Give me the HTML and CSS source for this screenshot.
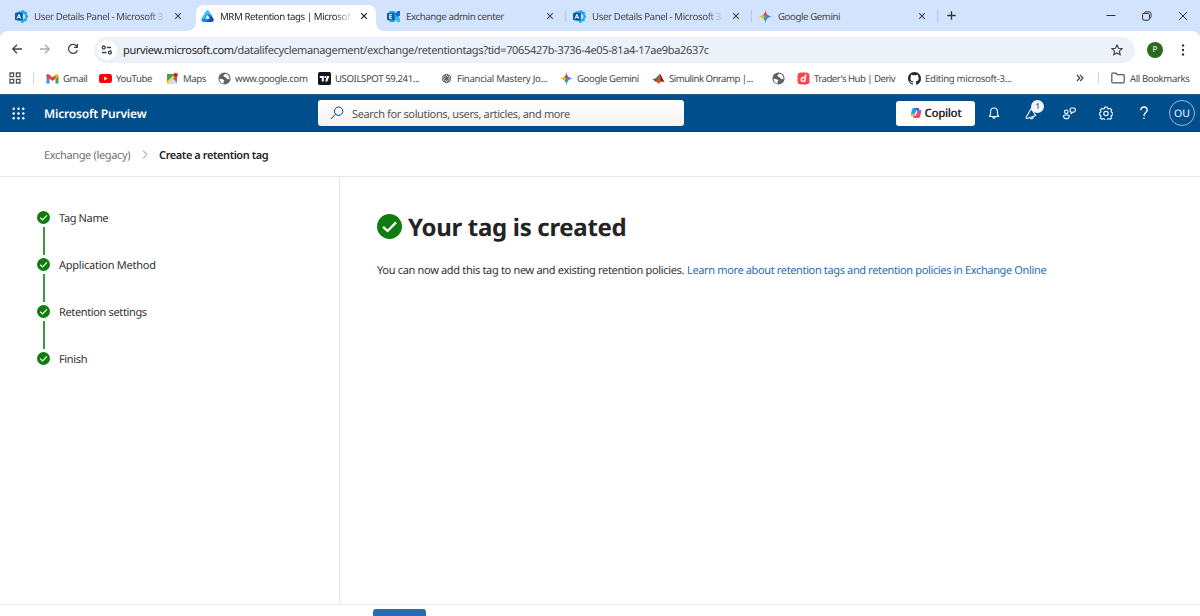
FILE: index.html
```html
<!DOCTYPE html>
<html lang="en">
<head>
    <meta charset="UTF-8" />
    <meta name="viewport" content="width=device-width, initial-scale=1" />
    <title>MRM Retention tags | Microsoft Purview</title>
    <link rel="stylesheet" href="styles.css">
</head>
<body>
    <!-- shared icons -->
    <svg class="sprite" width="0" height="0">
        <symbol id="admin" viewBox="0 0 13 13">
            <path d="M4 1l2 .6L7 .3h2l.5 1.500 1.700-.3 1 1.700-.8 1.400 1.600 1v2l-1.600.9.6 1.600-1.300 1.500-1.700-.4L8.500 12.700H6.300L5.500 11H3L1 9V3z" fill="#1fa9ea"/>
            <path d="M7.500 3.500Q10.300 4 10.300 6.500T7.500 9.500z" fill="#b9eafd"/>
            <rect y="2.700" width="7.800" height="7.600" rx="1" fill="#0c59a4"/>
            <path d="M2 8.600 3.900 4.400 5.800 8.600M2.700 7.300h2.400" fill="none" stroke="#fff" stroke-width="1"/>
        </symbol>
        <symbol id="gemini" viewBox="0 0 12 12">
            <path d="M6 0C6.400 3.700 8.300 5.600 12 6 8.300 6.400 6.400 8.300 6 12 5.600 8.300 3.700 6.400 0 6 3.700 5.600 5.600 3.700 6 0z" fill="#4285f4"/>
            <path d="M6 0C6.400 3.700 7 4.600 8 5.200L4 6 3.800 4.900C5.200 4 5.700 2.700 6 0z" fill="#ea4335"/>
            <path d="M0 6c2-.2 3.300-.8 4.200-1.700L5.500 6 4.200 7.700C3.300 6.800 2 6.200 0 6z" fill="#fbbc04"/>
            <path d="M4.200 7.700 6 6.300 7.200 8.500C6.500 9.400 6.200 10.400 6 12 5.800 10.200 5.200 8.700 4.200 7.700z" fill="#34a853"/>
        </symbol>
        <symbol id="globe" viewBox="0 0 12 12">
            <circle cx="6" cy="6" r="5.600" fill="#5f6368"/>
            <path d="M1.400 6.200 4.500 6.700 6 8l-1 .8.300 1.900C3 10.500 1.300 8.600 1.400 6.200zM6.600 1.500 5 3l.6 1.400L7.500 5l.7 1.500 2.300.2C11 4 9.200 1.700 6.600 1.500z" fill="#fff"/>
        </symbol>
        <symbol id="close" viewBox="0 0 8 8">
            <path d="M1.200 1.200l5.600 5.600M6.800 1.200 1.200 6.800" fill="none" stroke="currentColor" stroke-width="1.200"/>
        </symbol>
        <symbol id="check" viewBox="0 0 24 24">
            <circle cx="12" cy="12" r="12" fill="#107c10"/>
            <path d="M5.800 12.300 10.200 16.300 18.300 8" fill="none" stroke="#fff" stroke-width="2.200"/>
        </symbol>
    </svg>

    <div class="tab-strip">
        <div class="tab">
            <svg class="tab-icon"><use href="#admin"/></svg>
            <span class="tab-title fade t1">User Details Panel - Microsoft 3</span>
            <svg class="close"><use href="#close"/></svg>
        </div>
        <div class="tab active">
            <svg class="tab-icon" viewBox="0 0 13 13">
                <path d="M5 1.500Q6.500-.5 8 1.500L12.500 9Q13 11.500 10.500 12h-8Q0 11.500.5 9z" fill="#1688e8"/>
                <path d="M5 1.500Q6.500-.5 8 1.500L9.500 4H6L2.800 9 .5 9z" fill="#35c9f0"/>
                <path d="M10 5l2.500 4q.5 2.500-2 3H5L8 9z" fill="#164fc4"/>
                <path d="M6.500 4.800 8.700 8.800H4.300z" fill="#fff"/>
            </svg>
            <span class="tab-title fade t2">MRM Retention tags | Microsof</span>
            <svg class="close"><use href="#close"/></svg>
        </div>
        <div class="tab">
            <svg class="tab-icon" viewBox="0 0 13 13">
                <path d="M2.500 1h5l4.500 5.500-4.500 5.500h-5z" fill="#2aa8e8"/>
                <path d="M8 4.500 10.500 1H13v4.500L11 7z" fill="#0a70c8"/>
                <path d="M8 8.500 10.500 6 13 8.500V12h-2.500z" fill="#38bdf0"/>
                <rect y="2.800" width="7.500" height="7.500" rx="1" fill="#0a5eb0"/>
                <path d="M5 4.600H2.800v4H5M2.800 6.600H4.700" fill="none" stroke="#fff"/>
            </svg>
            <span class="tab-title t3">Exchange admin center</span>
            <svg class="close"><use href="#close"/></svg>
        </div>
        <div class="tab divided">
            <svg class="tab-icon"><use href="#admin"/></svg>
            <span class="tab-title fade t1">User Details Panel - Microsoft 3</span>
            <svg class="close"><use href="#close"/></svg>
        </div>
        <div class="tab divided">
            <svg class="tab-icon"><use href="#gemini"/></svg>
            <span class="tab-title t5">Google Gemini</span>
            <svg class="close"><use href="#close"/></svg>
        </div>
        <div class="new-tab">
            <svg width="9" height="9" viewBox="0 0 9 9"><path d="M4.500.3v8.400M.3 4.500h8.400" stroke="#333" stroke-width="1.300"/></svg>
        </div>
        <div class="window-buttons">
            <svg width="10" height="10" viewBox="0 0 10 10"><path d="M.5 4.500h9" stroke="#333"/></svg>
            <svg width="10" height="10" viewBox="0 0 10 10" fill="none" stroke="#333"><rect x=".6" y="2.400" width="6.800" height="6.800" rx="1.300"/><path d="M2.500 2V1.800Q2.600.8 4 .8h3.200Q9 .8 9 2.600v3Q9 7.300 7.600 7.500"/></svg>
            <svg width="10" height="10" viewBox="0 0 10 10"><path d="M1 1l8 8M9 1 1 9" stroke="#333"/></svg>
        </div>
    </div>

    <div class="toolbar">
        <div class="nav-buttons">
            <svg width="12" height="12" viewBox="0 0 12 12"><path d="M11 6H2M6 1.700 1.700 6 6 10.300"/></svg>
            <svg class="disabled" width="12" height="12" viewBox="0 0 12 12"><path d="M1 6h9M6 1.700 10.300 6 6 10.300"/></svg>
            <svg width="12" height="12" viewBox="0 0 12 12"><path d="M10 3.800A4.500 4.500 0 1 0 10.300 7.200M10.300 1v3.300H7"/></svg>
        </div>
        <div class="address-bar">
            <div class="site-info">
                <svg width="12" height="10" viewBox="0 0 12 10" fill="none" stroke="#3c4043" stroke-width="1.300"><circle cx="2.700" cy="2.500" r="1.500"/><path d="M5.800 2.500H10M1 7.500h4.500"/><circle cx="8.900" cy="7.500" r="1.500"/></svg>
            </div>
            <span class="url"><span class="host">purview.microsoft.com</span>/datalifecyclemanagement/exchange/retentiontags?tid=7065427b-3736-4e05-81a4-17ae9ba2637c</span>
            <svg class="star" width="12" height="12" viewBox="0 0 12 12"><path d="M6 1l1.500 3.300 3.600.4-2.700 2.400.8 3.600L6 8.900l-3.200 1.800.8-3.600L.9 4.700l3.600-.4z" fill="none" stroke="#3c4043" stroke-width="1.100"/></svg>
        </div>
        <div class="profile">P</div>
        <svg class="menu-dots" width="4" height="14" viewBox="0 0 4 14" fill="#333"><circle cx="2" cy="2.500" r="1.200"/><circle cx="2" cy="7" r="1.200"/><circle cx="2" cy="11.500" r="1.200"/></svg>
    </div>

    <div class="bookmarks">
        <svg class="apps" width="12" height="12" viewBox="0 0 12 12" fill="none" stroke="#555" stroke-width="1.300"><path d="M1 1h3.600v3.600H1zM7.400 1H11v3.600H7.400zM1 7.400h3.600V11H1zM7.400 7.400H11V11H7.400z"/></svg>
        <i class="divider"></i>
        <div class="bookmark-list">
            <a class="b1"><svg viewBox="0 0 13 13"><path d="M.5 11.500V3.500l3 2.300v5.700z" fill="#4285f4"/><path d="M9.500 11.500V5.800l3-2.300v8z" fill="#34a853"/><path d="M.5 4.500V3Q1 1.300 2.700 2.300L6.500 5.200l3.800-2.900v4L6.500 9 .5 4.500z" fill="#ea4335"/><path d="M9.500 3 11 2q1.500 0 1.500 1.500v1L9.500 7z" fill="#fbbc04"/></svg><span>Gmail</span></a>
            <a class="b2"><svg viewBox="0 0 13 13"><rect y="2" width="13" height="9" rx="2.300" fill="#f00"/><path d="M5.200 4.500v4l3.500-2z" fill="#fff"/></svg><span>YouTube</span></a>
            <a class="b3"><svg viewBox="0 0 13 13"><path d="M1 2h10v10H1z" fill="#34a853"/><path d="M1 12 7 6l4 4.500V12z" fill="#dadce0"/><path d="M6.500 6 11 10.500V4z" fill="#4285f4"/><path d="M1 9.500 8 2.500 9 5l-7 7H1z" fill="#fbd248"/><path d="M9.300 8Q8.900 5.500 7.600 4.500 6.500 2.500 8 1.200q2-1.200 3.600.4 1 1.600-.3 3.200Q9.800 6.200 9.300 8z" fill="#ea4335"/><circle cx="9.500" cy="3.200" r="1" fill="#811411"/></svg><span>Maps</span></a>
            <a class="b4"><svg><use href="#globe"/></svg><span>www.google.com</span></a>
            <a class="b5"><svg viewBox="0 0 13 13"><rect width="13" height="13" rx="1.700" fill="#131722"/><path d="M1.800 4h4v5.500h-2V6h-2zM8.800 4h2.600L9.300 9.500H7.200z" fill="#fff"/><circle cx="7.200" cy="5" r="1" fill="#fff"/></svg><span>USOILSPOT 59.241...</span></a>
            <a class="b6"><svg viewBox="0 0 13 13" fill="none" stroke="#5a5a5a"><circle cx="6.500" cy="4.200" r="2"/><circle cx="8.500" cy="5.300" r="2"/><circle cx="8.500" cy="7.700" r="2"/><circle cx="6.500" cy="8.800" r="2"/><circle cx="4.500" cy="7.700" r="2"/><circle cx="4.500" cy="5.300" r="2"/></svg><span>Financial Mastery Jo...</span></a>
            <a class="b7"><svg><use href="#gemini"/></svg><span>Google Gemini</span></a>
            <a class="b8"><svg viewBox="0 0 13 13"><path d="M.5 7.500 4 6 7.500 2 6.500 8 4 10z" fill="#2374ae"/><path d="M4 10Q6 6 8 1.500q2 4.500 4.500 9Q10 8.500 8.500 10L6.500 12q-.7-1.800-2.500-2z" fill="#d85119"/><path d="M8 1.500q2 4.500 4.500 9Q10 8.500 9 10z" fill="#7f1710"/></svg><span>Simulink Onramp |...</span></a>
            <a class="b9"><svg><use href="#globe"/></svg></a>
            <a class="b10"><svg viewBox="0 0 13 13"><rect x=".5" y=".5" width="12" height="12" rx="3.500" fill="#ff444f"/><path d="M8.700 2.500 7.700 9.200H5.800Q4 9.200 4.300 7.500 4.700 5.600 6.500 5.600h1.500" fill="none" stroke="#fff" stroke-width="1.500"/></svg><span>Trader's Hub | Deriv</span></a>
            <a class="b11"><svg viewBox="0 0 16 16"><path fill="#24292f" d="M8 0C3.580 0 0 3.580 0 8c0 3.540 2.290 6.530 5.470 7.590.4.070.55-.17.55-.38v-1.490c-2.010.37-2.530-.49-2.690-.94-.09-.23-.48-.94-.82-1.130-.28-.15-.68-.52-.01-.53.63-.01 1.080.58 1.230.82.72 1.210 1.870.87 2.330.66.07-.52.28-.87.51-1.070-1.780-.2-3.640-.89-3.640-3.950 0-.87.31-1.590.82-2.150-.08-.2-.36-1.020.08-2.120 0 0 .67-.21 2.200.82a7.600 7.600 0 0 1 4 0c1.530-1.040 2.200-.82 2.200-.82.44 1.100.16 1.920.08 2.120.51.56.82 1.270.82 2.150 0 3.070-1.870 3.750-3.650 3.950.29.25.54.73.54 1.480v2.200c0 .21.15.46.55.38A8 8 0 0 0 16 8c0-4.420-3.580-8-8-8z"/></svg><span>Editing microsoft-3...</span></a>
        </div>
        <svg class="more" width="8" height="8" viewBox="0 0 8 8" fill="none" stroke="#444" stroke-width="1.200"><path d="M1 1l2.800 3L1 7M4.200 1 7 4 4.200 7"/></svg>
        <i class="divider"></i>
        <a class="all-bookmarks"><svg width="14" height="12" viewBox="0 0 14 12"><path d="M1.700 1.200H5l1.300 1.500h6q.9 0 .9.900v6.500q0 .8-.9.800H1.700q-.9 0-.9-.8V2q0-.8.9-.8z" fill="none" stroke="#555" stroke-width="1.200"/></svg><span>All Bookmarks</span></a>
    </div>

    <header class="app-header">
        <svg class="waffle" width="13" height="13" viewBox="0 0 13 13" fill="#fff"><circle cx="1.700" cy="1.700" r="1.200"/><circle cx="6.500" cy="1.700" r="1.200"/><circle cx="11.300" cy="1.700" r="1.200"/><circle cx="1.700" cy="6.500" r="1.200"/><circle cx="6.500" cy="6.500" r="1.200"/><circle cx="11.300" cy="6.500" r="1.200"/><circle cx="1.700" cy="11.300" r="1.200"/><circle cx="6.500" cy="11.300" r="1.200"/><circle cx="11.300" cy="11.300" r="1.200"/></svg>
        <span class="brand">Microsoft Purview</span>
        <div class="search">
            <svg width="14" height="14" viewBox="0 0 14 14" fill="none" stroke="#004578"><circle cx="8.600" cy="5.200" r="4.200"/><path d="M5.600 8.200.8 13"/></svg>
            <span>Search for solutions, users, articles, and more</span>
        </div>
        <div class="copilot">
            <svg width="12" height="12" viewBox="0 0 12 12"><path d="M3.500 1h4q1 0 1.400 1.200L9.300 3H7.500Q6.300 3 6 4.200L5 8Q4.700 9 3.500 9H2Q.4 9 .7 7.200L2 2.500Q2.300 1 3.500 1z" fill="#18a5e8"/><path d="M.9 6.500 5.300 7 5 8q-.3 1-1.500 1H2Q.4 9 .9 6.500z" fill="#f2b72c"/><path d="M8.500 11h-4q-1 0-1.400-1.200L2.700 9h1.800Q5.700 9 6 7.800L7 4Q7.300 3 8.500 3H10q1.600 0 1.300 1.800L10 9.500Q9.700 11 8.500 11z" fill="#e9487b"/><path d="M7 4q.3-1 1.500-1H10q1.600 0 1.300 1.800L11 6 6.700 5.500z" fill="#a45bdc"/><path d="M4 1h3.500q1 0 1.400 1.200L9.300 3H7.500z" fill="#2456d3"/><path d="M5.600 4.700h1.200L6.200 7.300H5z" fill="#fff"/></svg>
            <span>Copilot</span>
        </div>
        <div class="header-icons">
            <svg viewBox="0 0 14 14"><path d="M2.500 10.500h9l-1-2V5.700Q10.300 2 7 2T3.500 5.700v2.800zM5.600 10.700q.3 1.700 1.400 1.700t1.400-1.700"/></svg>
            <div class="whats-new">
                <svg viewBox="0 0 14 14"><path d="M2.200 11.200 7.200 2.500l4.500 7-8.500 3q-1.500.2-1-1.300zM6 11.600q1 2 2.700.8.900-.8.400-2"/></svg>
                <span class="badge">1</span>
            </div>
            <svg viewBox="0 0 14 14"><circle cx="4.300" cy="5.800" r="1.800"/><path d="M2.700 9h3.400q1.200 0 1.200 1.200-.3 2.600-2.900 2.600T1.500 10.200Q1.500 9 2.700 9zM9.300 2h2.800q1.100 0 1.100 1.100v1.800Q13.200 6 12 6h-1L9.200 7.300V6Q8.200 5.800 8.200 4.900V3.100Q8.200 2 9.300 2z"/></svg>
            <svg viewBox="0 0 14 14"><path d="M5.900 1h2.200l.5 1.500 1.100.5 1.500-.7 1.500 1.500-.7 1.500.5 1.100 1.400.5v1.800l-1.400.5-.5 1.100.7 1.500-1.500 1.500-1.500-.7-1.100.5-.5 1.400H5.900l-.5-1.400-1.100-.5-1.500.7-1.500-1.500.7-1.500-.5-1.100L.3 8.700V6.900l1.200-.5L2 5.300l-.7-1.500 1.500-1.500 1.500.7 1.100-.5z"/><circle cx="7" cy="7.500" r="2.200"/></svg>
            <svg viewBox="0 0 14 14"><path class="question" d="M3.800 4.200Q3.900 1 7 1t3.200 3Q10.200 5.500 8.500 6.700 7 7.800 7 10M7 11.500V13"/></svg>
        </div>
        <div class="account">OU</div>
    </header>

    <nav class="breadcrumb">
        <span class="crumb">Exchange (legacy)</span>
        <svg width="6" height="9" viewBox="0 0 6 9"><path d="M1 .5l4 4-4 4" fill="none" stroke="#888"/></svg>
        <span class="current">Create a retention tag</span>
    </nav>

    <div class="wizard">
        <ol class="steps">
            <li><svg><use href="#check"/></svg><span class="s1">Tag Name</span></li>
            <li><svg><use href="#check"/></svg><span class="s2">Application Method</span></li>
            <li><svg><use href="#check"/></svg><span class="s3">Retention settings</span></li>
            <li><svg><use href="#check"/></svg><span class="s4">Finish</span></li>
        </ol>
        <main class="content">
            <div class="title-row">
                <svg><use href="#check"/></svg>
                <h1>Your tag is created</h1>
            </div>
            <p><span class="message">You can now add this tag to new and existing retention policies.</span> <a class="learn-more">Learn more about retention tags and retention policies in Exchange Online</a></p>
        </main>
    </div>
    <footer class="wizard-footer">
        <div class="done-btn"></div>
    </footer>
</body>
</html>
```
FILE: styles.css
```css
* {
    margin: 0; padding: 0; box-sizing: border-box;
}
body {
    width: 1200px;
    height: 616px;
    overflow: hidden;
    display: flex;
    flex-direction: column;
    font-family: "Segoe UI", "Noto Sans", sans-serif;
    font-size: 9.7px;
    background: #fff;
    color: #323130;
    white-space: nowrap;
    text-rendering: geometricPrecision;
}
svg { flex: none; display: block; }
.sprite { display: none; }

/* tabs */
.tab-strip {
    height: 31px;
    flex: none;
    display: flex;
    padding-left: 8px;
    background: #d3e3fd;
}
.tab {
    position: relative;
    width: 186px;
    display: flex;
    align-items: center;
    padding: 1px 12px 0 7px;
    color: #474747;
}
.tab-icon { width: 13px; height: 13px; margin-right: 6px; }
.tab-title { width: 131px; letter-spacing: -0.43px; }
.t1 { letter-spacing: -0.4px; }
.fade {
    -webkit-mask-image: linear-gradient(to right, #000 114px, transparent 132px);
    mask-image: linear-gradient(to right, #000 114px, transparent 132px);
}
.close { width: 8px; height: 8px; margin-left: auto; }
.tab > * { position: relative; }
.tab.active { color: #1f1f1f; }
.tab.active::before {
    content: "";
    position: absolute;
    left: 2px; right: 4px; top: 5px; bottom: 0;
    background: #fff;
    border-radius: 8px 8px 0 0;
}
.tab.active::after {
    content: "";
    position: absolute;
    left: -6px; right: -4px; bottom: 0;
    height: 8px;
    background: radial-gradient(circle at 0 0, transparent 7.5px, #fff 8px) left / 8px 8px no-repeat,
        radial-gradient(circle at 100% 0, transparent 7.5px, #fff 8px) right / 8px 8px no-repeat;
}
.tab.divided::before, .new-tab::before {
    content: "";
    position: absolute;
    left: -1px; top: 10px;
    width: 1px; height: 12px;
    background: #a8c7fa;
}
.new-tab {
    position: relative;
    width: 26px;
    display: grid;
    place-items: center;
}
.window-buttons {
    margin-left: auto;
    display: flex;
    gap: 26px;
    align-items: center;
    padding-right: 12px;
}

/* toolbar */
.toolbar {
    height: 34px;
    flex: none;
    display: flex;
    align-items: center;
    padding: 3px 15px 0 11px;
    background: linear-gradient(#d3e3fd, #d3e3fd) top / 100% 8px no-repeat;
    position: relative;
    z-index: 0;
}
.toolbar::before {
    content: "";
    position: absolute;
    inset: 0;
    z-index: -1;
    background: #fff;
    border-radius: 8px 8px 0 0;
}
.nav-buttons {
    display: flex;
    gap: 16px;
    width: 83px;
    padding-bottom: 1px;
    fill: none;
    stroke: #444;
    stroke-width: 1.3;
}
.disabled { stroke: #aaa; }
.address-bar {
    width: 1041px;
    height: 26px;
    display: flex;
    align-items: center;
    background: #ecf1fa;
    border-radius: 13px;
    padding: 0 12px 0 3px;
}
.site-info {
    width: 20px; height: 20px;
    border-radius: 50%;
    background: #fff;
    display: grid;
    place-items: center;
}
.url { margin-left: 6px; padding-top: 2px; font-size: 11px; color: #474747; letter-spacing: -0.34px; }
.host { color: #1f1f1f; }
.star { margin-left: auto; }
.profile {
    width: 16px; height: 16px;
    margin: 0 18px 0 12px;
    border-radius: 50%;
    background: #2c6b1d;
    color: #fff;
    font-size: 8px;
    display: grid;
    place-items: center;
}

/* bookmarks */
.bookmarks {
    height: 29px;
    flex: none;
    display: flex;
    align-items: center;
    padding: 0 0 3px 9px;
    color: #474747;
    font-size: 9.6px;
    letter-spacing: -0.4px;
}
.divider { width: 1px; height: 12px; background: #c7dafc; }
.apps { margin-right: 12px; }
.bookmark-list {
    margin-left: 12px;
    display: grid;
    grid-template-columns: 53px 67px 52px 100px 122px 120px 92px 120px 25px 111px 168px;
}
.bookmark-list a { display: flex; align-items: center; }
.bookmark-list svg { width: 13px; height: 13px; margin-right: 4px; }
.b6 span, .b11 span { letter-spacing: -0.3px; }
.b8 span, .b10 span { letter-spacing: -0.52px; }
.more { margin-right: 14px; }
.all-bookmarks { margin-left: 12px; display: flex; align-items: center; gap: 5px; }

/* suite header */
.app-header {
    height: 38px;
    flex: none;
    display: flex;
    align-items: center;
    padding: 0 5px 0 12px;
    background: #004e8c;
    border-top: 1px solid #1d5b8e;
    border-bottom: 1px solid #003f73;
    color: #fff;
}
.brand { width: 274px; margin-left: 19px; font-size: 12px; font-weight: 600; letter-spacing: -0.19px; }
.search {
    width: 366px; height: 26px;
    display: flex;
    align-items: center;
    gap: 8px;
    padding-left: 12px;
    background: linear-gradient(#fff, #f3f3f3);
    border-radius: 3px;
    color: #555;
    font-size: 11px;
    letter-spacing: -0.37px;
}
.search span { padding-top: 2px; }
.copilot {
    width: 79px; height: 25px;
    margin-left: 212px;
    display: flex;
    align-items: center;
    justify-content: center;
    gap: 3px;
    background: #fff;
    border-radius: 3px;
    color: #242424;
    font-size: 11.5px;
    font-weight: 600;
    letter-spacing: -0.45px;
}
.copilot span { padding-top: 1px; }
.header-icons {
    display: flex;
    gap: 23.4px;
    margin-left: 12px;
    fill: none;
    stroke: #fff;
    stroke-width: 1.1;
}
.header-icons svg { width: 14px; height: 14px; }
.whats-new { position: relative; }
.badge {
    position: absolute;
    left: 7px; top: -6px;
    width: 13px; height: 13px;
    border-radius: 50%;
    background: #eef5fb;
    color: #222;
    font-size: 8px;
    line-height: 13px;
    text-align: center;
}
.question { stroke-width: 1.3; }
.account {
    width: 26px; height: 26px;
    margin-left: auto;
    padding-top: 1px;
    border: 1px solid #9dbcd8;
    border-radius: 50%;
    display: grid;
    place-items: center;
    font-size: 10.5px;
}

/* breadcrumb */
.breadcrumb {
    height: 45px;
    flex: none;
    display: flex;
    align-items: center;
    padding-left: 44px;
    border-bottom: 1px solid #e6e6e6;
    font-size: 11px;
}
.breadcrumb span { padding-top: 2px; }
.breadcrumb svg { margin: 0 11px 0 12px; }
.crumb { color: #707070; letter-spacing: -0.35px; }
.current { font-weight: 600; color: #242424; letter-spacing: -0.42px; }

/* wizard */
.wizard { height: 427px; flex: none; display: flex; }
.steps {
    width: 340px;
    padding: 34px 0 0 37px;
    border-right: 1px solid #e6e6e6;
    list-style: none;
    font-size: 11px;
    letter-spacing: -0.36px;
}
.steps li {
    position: relative;
    display: flex;
    align-items: center;
    height: 13px;
    margin-bottom: 34px;
}
.steps span { padding-top: 2px; }
.steps svg { width: 13px; height: 13px; margin-right: 9px; }
.steps .s2 { letter-spacing: -0.25px; }
.steps li:not(:last-child)::after {
    content: "";
    position: absolute;
    left: 6px; top: 16px;
    width: 1.5px; height: 28px;
    background: #3d993d;
}
.content { padding: 33px 0 0 37px; font-size: 11px; }
.title-row { display: flex; align-items: center; height: 36px; gap: 6px; }
.title-row svg { width: 25px; height: 25px; margin-bottom: 4px; }
h1 { font-size: 24px; font-weight: 700; line-height: 36px; color: #242424; letter-spacing: -0.31px; }
.content p { margin-top: 17px; line-height: 16px; }
.message { letter-spacing: -0.32px; }
.learn-more { color: #2b6cb0; letter-spacing: -0.36px; }

.wizard-footer {
    flex: 1;
    border-top: 1px solid #eaeaea;
    padding: 4px 0 0 373px;
}
.done-btn { width: 53px; height: 22px; border-radius: 3px; background: #2b6cb0; }
```
